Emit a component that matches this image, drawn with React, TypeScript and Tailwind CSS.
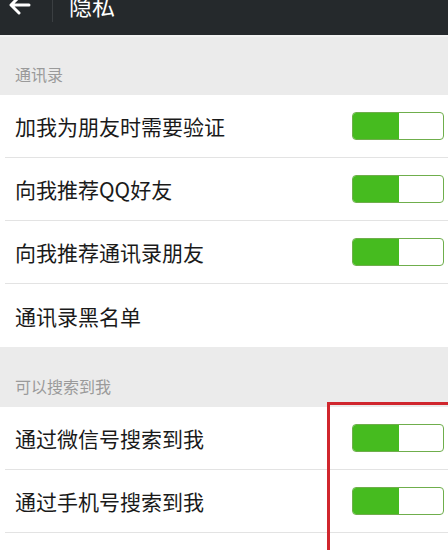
import React from "react";

const Toggle = () => (
  <div className="mr-[4px] flex h-[28px] w-[92px] overflow-hidden rounded-[4px] border border-[#6fae4c] bg-white">
    <div className="h-full w-[46px] bg-[#46bb1f]" />
  </div>
);

const Row = ({ text, toggle, last }: { text: string; toggle?: boolean; last?: boolean }) => (
  <div className="bg-white pl-[5px]">
    <div
      className={
        "flex h-[63px] items-center justify-between pl-[10px] " +
        (last ? "" : "border-b border-[#e3e3e3]")
      }
    >
      <span className="text-[21px] leading-[28px] text-[#1a1a1a]">{text}</span>
      {toggle && <Toggle />}
    </div>
  </div>
);

const SectionHeader = ({ text, h }: { text: string; h: string }) => (
  <div className={"flex items-end bg-[#ebebeb] pb-[11px] pl-[15px] " + h}>
    <span className="text-[16px] leading-[20px] text-[#9a9a9a]">{text}</span>
  </div>
);

export default function App() {
  return (
    <div
      className="relative flex h-[550px] w-[448px] flex-col overflow-hidden bg-[#ebebeb]"
      style={{ fontFamily: '"Noto Sans CJK SC", "Noto Sans", sans-serif' }}
    >
      <div className="h-[35px] shrink-0 overflow-hidden bg-[#25292c]">
        <div className="mt-[-20px] flex h-[50px] items-center">
          <svg
            width="22"
            height="20"
            viewBox="0 0 22 20"
            className="ml-[9px]"
            fill="none"
            stroke="white"
            strokeWidth="3"
            strokeLinecap="round"
            strokeLinejoin="round"
          >
            <path d="M20 10H3M10 2L2 10L10 18" />
          </svg>
          <div className="ml-[21px] h-[42px] w-px self-start bg-[#3b3f42]" />
          <span className="ml-[16px] text-[23px] leading-[30px] text-white">隐私</span>
        </div>
      </div>
      <div className="h-[2px] shrink-0 bg-[#f2f2f2]" />
      <SectionHeader text="通讯录" h="h-[58px] shrink-0" />
      <Row text="加我为朋友时需要验证" toggle />
      <Row text="向我推荐QQ好友" toggle />
      <Row text="向我推荐通讯录朋友" toggle />
      <Row text="通讯录黑名单" last />
      <SectionHeader text="可以搜索到我" h="h-[60px] shrink-0" />
      <Row text="通过微信号搜索到我" toggle />
      <Row text="通过手机号搜索到我" toggle />
      <div className="flex-1 bg-white" />
      <div className="pointer-events-none absolute left-[327px] top-[402px] h-[300px] w-[200px] border-[3px] border-[#d0262d]" />
    </div>
  );
}
